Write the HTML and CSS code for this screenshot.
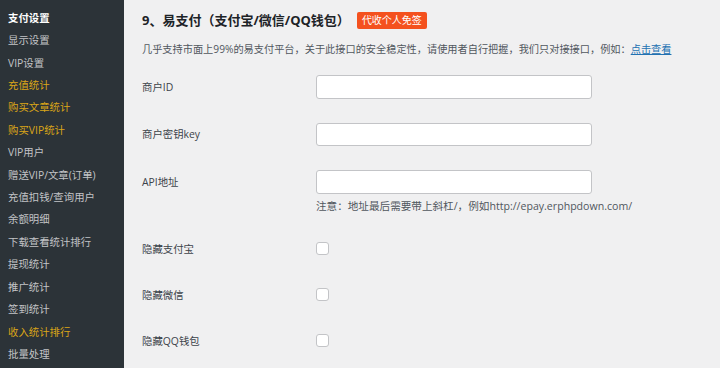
FILE: index.html
```html
<!doctype html>
<html lang="zh-CN">
<head>
  <meta charset="UTF-8">
  <title>支付设置</title>
  <link rel="stylesheet" href="styles.css">
</head>
<body>

<div id="menu">
  <ul>
    <li><a>基础设置</a></li>
    <li class="current"><a>支付设置</a></li>
    <li><a>显示设置</a></li>
    <li><a>VIP设置</a></li>
    <li class="hot"><a>充值统计</a></li>
    <li class="hot"><a>购买文章统计</a></li>
    <li class="hot"><a>购买VIP统计</a></li>
    <li><a>VIP用户</a></li>
    <li><a>赠送VIP/文章(订单)</a></li>
    <li><a>充值扣钱/查询用户</a></li>
    <li><a>余额明细</a></li>
    <li><a>下载查看统计排行</a></li>
    <li><a>提现统计</a></li>
    <li><a>推广统计</a></li>
    <li><a>签到统计</a></li>
    <li class="hot"><a>收入统计排行</a></li>
    <li><a>批量处理</a></li>
  </ul>
</div>

<div id="content">
  <h2>9、易支付（支付宝/微信/QQ钱包）<span class="tag">代收个人免签</span></h2>
  <p class="desc">几乎支持市面上99%的易支付平台，关于此接口的安全稳定性，请使用者自行把握，我们只对接接口，例如：<a href="#">点击查看</a></p>

  <div class="form">
    <div class="row">
      <label>商户ID</label>
      <div class="field"><input type="text"></div>
    </div>
    <div class="row">
      <label>商户密钥key</label>
      <div class="field"><input type="text"></div>
    </div>
    <div class="row">
      <label>API地址</label>
      <div class="field">
        <input type="text">
        <p class="note">注意：地址最后需要带上斜杠/，例如http://epay.erphpdown.com/</p>
      </div>
    </div>
    <div class="row check">
      <label>隐藏支付宝</label>
      <div class="field"><input type="checkbox"></div>
    </div>
    <div class="row check">
      <label>隐藏微信</label>
      <div class="field"><input type="checkbox"></div>
    </div>
    <div class="row check">
      <label>隐藏QQ钱包</label>
      <div class="field"><input type="checkbox"></div>
    </div>
  </div>
</div>

</body>
</html>
```

FILE: styles.css
```css
html, body {
  margin: 0;
  height: 368px;
  overflow: hidden;
}

body {
  display: flex;
  background: #f0f0f1;
  font-family: 'Open Sans', 'Noto Sans CJK SC', sans-serif;
  color: #3c434a;
}

#menu {
  width: 124px;
  flex: none;
  background: #2c3338;
}

#menu ul {
  list-style: none;
  margin: -15.6px 0 0;
  padding: 0;
}

#menu li a {
  display: block;
  padding: 3px 8px;
  font-size: 10.4px;
  line-height: 16.4px;
  color: #c3c4c7;
  white-space: nowrap;
}

#menu li.current a {
  color: #fff;
  font-weight: bold;
}

#menu li.hot a {
  color: #dba617;
}

#content {
  flex: 1;
  padding-left: 18px;
}

h2 {
  margin: 10px 0 0;
  font-size: 13px;
  line-height: 20px;
  color: #1d2327;
  font-weight: bold;
}

.tag {
  display: inline-block;
  vertical-align: 1px;
  margin-left: 7px;
  padding: 0 5px;
  height: 17px;
  line-height: 17px;
  font-size: 10px;
  font-weight: normal;
  color: #fff;
  background: #f4511e;
  border-radius: 2px;
}

.desc {
  margin: 10px 0 0;
  font-size: 10.2px;
  line-height: 18px;
  color: #50575e;
}

.desc a {
  color: #2271b1;
}

.form {
  margin-top: 5px;
}

.row {
  display: grid;
  grid-template-columns: 174px 1fr;
}

.row label {
  padding-top: 15.5px;
  font-size: 10.4px;
  line-height: 16px;
  color: #3c434a;
}

.row .field {
  padding: 12px 0;
}

.row input[type=text] {
  display: block;
  box-sizing: border-box;
  width: 276px;
  height: 23.5px;
  margin: 0;
  border: 1px solid #c3c4c7;
  border-radius: 3px;
  background: #fff;
}

.note {
  margin: 4px 0 0;
  font-size: 10.6px;
  line-height: 16px;
  color: #50575e;
}

.row.check label {
  padding-top: 15px;
}

.row.check .field {
  padding: 16.5px 0;
}

.row.check input {
  display: block;
  appearance: none;
  width: 13px;
  height: 13px;
  margin: 0;
  border: 1px solid #c3c4c7;
  border-radius: 3px;
  background: #fff;
  box-sizing: border-box;
}
```
